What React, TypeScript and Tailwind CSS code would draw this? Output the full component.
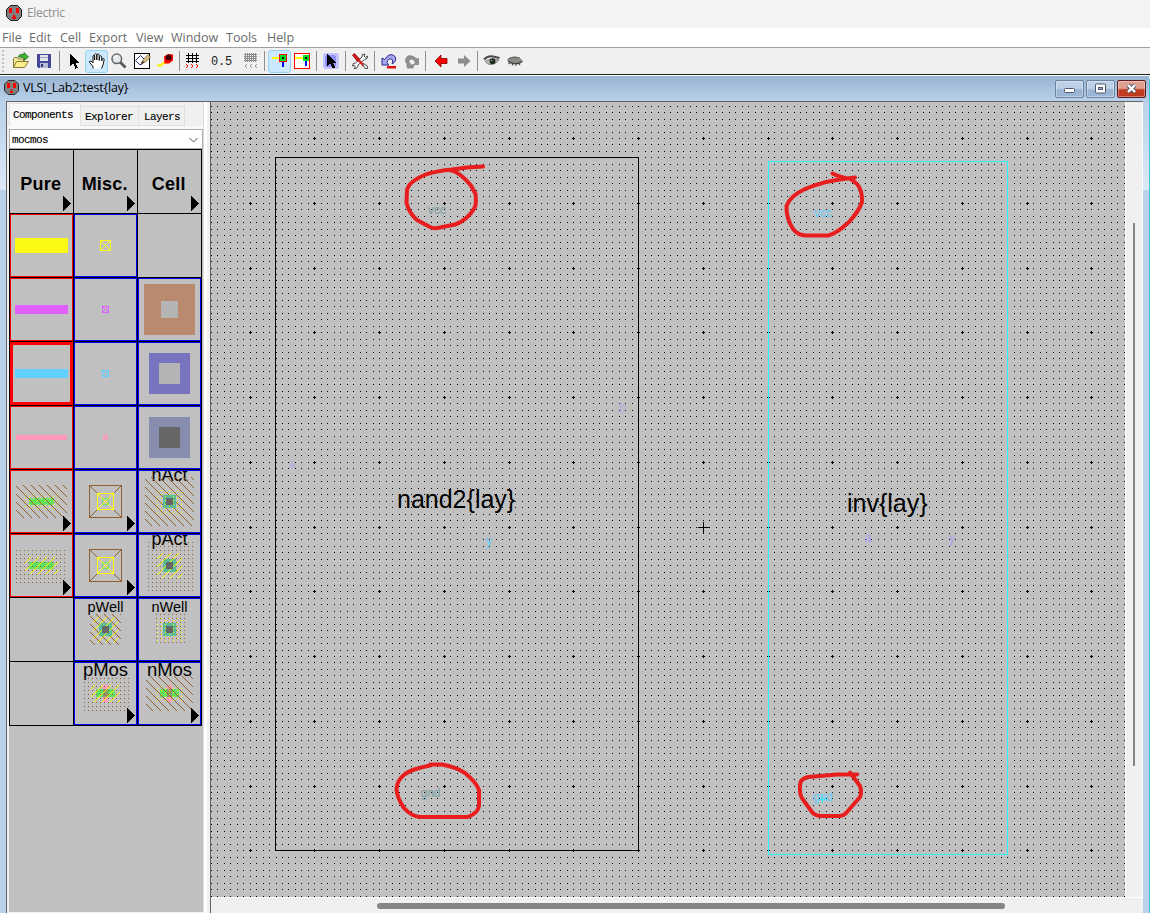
import React, { ReactNode } from "react";

/* ---------- application icon ---------- */
const AppIcon = ({ size = 16 }: { size?: number }) => (
  <svg width={size} height={size} viewBox="0 0 16 16">
    <path d="M4.500 .5h7l4 4v7l-4 4h-7l-4-4v-7z" fill="#808080" stroke="#1a1a1a" />
    <path d="M3 3h3v5h-3zM10 3h3v5h-3zM7 10h2v2h1v2h-4v-2h1z" fill="#ff0000" shapeRendering="crispEdges" />
  </svg>
);

/* ---------- toolbar ---------- */
const Icon = ({ children, crisp }: { children: ReactNode; crisp?: boolean }) => (
  <svg width="18" height="18" viewBox="0 0 18 18" fill="none" shapeRendering={crisp ? "crispEdges" : "auto"}>
    {children}
  </svg>
);

const Slot = ({ w, on, children }: { w: string; on?: boolean; children?: ReactNode }) => (
  <div
    className={
      "flex h-[23px] shrink-0 items-center justify-center " +
      w +
      (on ? " rounded-[3px] border border-[#99d1f5] bg-[#cce8ff]" : "")
    }
  >
    {children}
  </div>
);

const Sep = ({ w }: { w: string }) => (
  <div className={"flex h-[20px] shrink-0 justify-center " + w}>
    <div className="h-full w-px bg-[#909090]" />
  </div>
);

const Eye = ({ open }: { open?: boolean }) => (
  <Icon>
    {open ? (
      <>
        <path d="M1 7.500Q5 3.500 10 4.500L16.500 6" stroke="#4a4a4a" strokeWidth="2" />
        <path d="M2 9.500Q8 5.500 16 8Q12 13 7 12.500Q4 12 2 9.500Z" fill="#c4c4bc" stroke="#666" strokeWidth=".8" />
        <circle cx="9.500" cy="9.300" r="3" fill="#1c2a20" />
        <circle cx="8.600" cy="8.500" r=".8" fill="#9ab09a" />
      </>
    ) : (
      <>
        <path d="M1 7.500Q6 3.500 12 5L16.500 8Q16 12.500 9 12.500Q3 12 1 7.500Z" fill="#8c8c88" />
        <path d="M2.500 6.500Q8 4 14 6" stroke="#5c5c5c" />
        <path
          d="M2 9Q9 14 16.500 9.500M4 10.500l-1.500 1.500M7 12l-1 1.500M10 12.300v1.500M13 11.500l1 1.500"
          stroke="#444"
          strokeWidth="1.100"
        />
      </>
    )}
  </Icon>
);

const Toolbar = () => (
  <div className="flex h-[26px] shrink-0 items-center bg-[#f0f0f0]">
    <div className="flex w-[9px] shrink-0 flex-col items-start gap-[2px] pl-[2px]">
      <i className="size-[2px] bg-[#c0c0c0]" />
      <i className="size-[2px] bg-[#c0c0c0]" />
      <i className="size-[2px] bg-[#c0c0c0]" />
      <i className="size-[2px] bg-[#c0c0c0]" />
      <i className="size-[2px] bg-[#c0c0c0]" />
      <i className="size-[2px] bg-[#c0c0c0]" />
    </div>
    <Slot w="w-[23px]">
      <Icon>
        <path d="M1.500 15.500v-9l1-1h3l1 1.500h5v8z" fill="#f5e79a" stroke="#8a7a30" />
        <path d="M1.500 15.500l3-6h12l-4 6z" fill="#ffec8c" stroke="#8a7a30" />
        <path
          d="M6.500 5Q7 1.500 12 2.500V.5l4.500 4.500-4.500 3.500V6Q9 4.500 6.500 5Z"
          fill="#3fb52e"
          stroke="#1d6b18"
          strokeWidth=".8"
        />
      </Icon>
    </Slot>
    <Slot w="w-[24px]">
      <Icon crisp>
        <path d="M2 2h14v14h-13l-1-1z" fill="#46469a" />
        <path d="M5 3h8v6h-8z" fill="#e4e6ee" />
        <path d="M5 5h8v1h-8z" fill="#9aa0bc" />
        <path d="M5 11h8v5h-8z" fill="#b8bfd4" />
        <path d="M6 12h2v3h-2z" fill="#30307c" />
      </Icon>
    </Slot>
    <Sep w="w-[6px]" />
    <Slot w="w-[23px]">
      <Icon crisp>
        <path d="M5 2v12l3-3 2.500 5.500 2-1-2.500-5h4z" fill="#000" />
      </Icon>
    </Slot>
    <Slot w="w-[23px]" on>
      <Icon>
        <path
          d="M5 16.500v-2L1.700 10.500Q1 8.800 3 9l2 2V4Q5.300 2.500 6.600 4V8 2.500Q7.500 .8 8.800 2.500V8 2.500Q10 1 11.200 2.800V8.500l.4-4.200Q13 3 13.700 4.800V9l.8-2.200Q16 5.800 16.200 7.500L15 13l-1.500 3.500"
          fill="#fff"
          stroke="#111"
          strokeWidth="1"
        />
      </Icon>
    </Slot>
    <Slot w="w-[22px]">
      <Icon>
        <path d="M10 10l5.500 5.500" stroke="#5a5258" strokeWidth="2.600" />
        <circle cx="6.800" cy="6.800" r="4.800" fill="#dfe9ee" stroke="#666" strokeWidth="1.500" />
        <path d="M4 6Q5 4 7.500 4" stroke="#fff" strokeWidth="1.500" />
      </Icon>
    </Slot>
    <Slot w="w-[24px]">
      <Icon>
        <rect x="1.500" y="1.500" width="15" height="15" fill="#fff" stroke="#000" />
        <path d="M7.500 3.500l5 5-4 4h-2l-4-4z" stroke="#24307c" />
        <path d="M8 12l2-4 5-5.500 2.500 2.500-5 5z" fill="#d8bb82" stroke="#7c6440" strokeWidth=".7" />
        <path d="M8 12l1.600-3.300 1.900 1.900z" fill="#333" />
      </Icon>
    </Slot>
    <Slot w="w-[22px]">
      <Icon>
        <path d="M1 13.500h4l3-3h3" stroke="#ffee00" strokeWidth="2.200" />
        <path d="M8 4.500l4-2.500 5 .5v6l-4 3H8.500z" fill="#ff0000" />
        <circle cx="12.700" cy="5.500" r="3" fill="#400" />
      </Icon>
    </Slot>
    <Sep w="w-[6px]" />
    <Slot w="w-[19px]">
      <Icon crisp>
        <path d="M5.500 1v10M9.500 1v10M13.500 1v10M3 3.500h13M3 6.500h13M3 9.500h13" stroke="#000" />
        <path d="M3 12l2 2-2 2M8 12l2 2-2 2M13 12l2 2-2 2" stroke="#ff0000" />
      </Icon>
    </Slot>
    <Slot w="w-[39px]">
      <span className="pt-[2px] pl-[2px] font-['Liberation_Mono',monospace] text-[12px] tracking-[-0.2px] text-[#202020]">
        0.5
      </span>
    </Slot>
    <Slot w="w-[21px]">
      <Icon crisp>
        <path
          d="M3.500 1v9M5.500 1v9M7.500 1v9M9.500 1v9M11.500 1v9M13.500 1v9M2 2.500h13M2 4.500h13M2 6.500h13M2 8.500h13"
          stroke="#8c8c8c"
        />
        <path d="M5 12l-2 2 2 2M10 12l-2 2 2 2M15 12l-2 2 2 2" stroke="#9a9a9a" />
      </Icon>
    </Slot>
    <Sep w="w-[7px]" />
    <Slot w="w-[23px]" on>
      <Icon crisp>
        <path d="M1 5h8v2H1z" fill="#ffff00" />
        <path d="M11 10h2v5h-2z" fill="#0000ff" />
        <rect x="8.500" y="2.500" width="7" height="7" fill="#00e020" stroke="#ff0000" />
        <path d="M11 5h2v2h-2z" fill="#000" />
      </Icon>
    </Slot>
    <Slot w="w-[22px]">
      <Icon crisp>
        <rect x="1.500" y="1.500" width="15" height="15" fill="#fff" stroke="#ff0000" />
        <path d="M2 5h8v2H2z" fill="#ffff00" />
        <path d="M12 9h2v5h-2z" fill="#0000ff" />
        <path d="M10 3h6v6h-6z" fill="#00e020" />
        <path d="M12 5h2v2h-2z" fill="#000" />
      </Icon>
    </Slot>
    <Sep w="w-[6px]" />
    <Slot w="w-[24px]">
      <Icon crisp>
        <rect x="1" y="1" width="16" height="16" rx="3" fill="#c4c4ff" />
        <rect x="3" y="3" width="11" height="12" rx="3" fill="#9090fa" />
        <path d="M5 2v12l3-3 3 5.500 2-1-2.500-5h4z" fill="#000" />
      </Icon>
    </Slot>
    <Sep w="w-[4px]" />
    <Slot w="w-[26px]">
      <Icon>
        <path
          d="M16.500 4l-2 1.500-1.500-1.500 1-2Q10.500 1.500 11 5L4.500 11Q1.500 10.500 1.500 14l2-.5 1 1.500-1.500 1.500Q7 17 7 13L13.500 7.500Q17 7.500 16.500 4Z"
          fill="#fff"
          stroke="#333"
          strokeWidth=".9"
        />
        <path d="M1.500 3l2-1.500 5.500 6-2.500 2z" fill="#e01515" stroke="#700" strokeWidth=".7" />
        <path d="M8 8.500l5 5.500" stroke="#e02020" strokeWidth="2.600" />
        <path d="M12.500 11.500l4 2.500v2.500h-2.500l-2-3.500z" fill="#eee" stroke="#333" strokeWidth=".8" />
      </Icon>
    </Slot>
    <Sep w="w-[3px]" />
    <Slot w="w-[25px]">
      <Icon>
        <path
          d="M2 6v7h7l-2-2.500Q8 6 11.500 7 14 8.500 12 12 17.500 9 15 4.500 10-.5 4.500 7.500Z"
          fill="#a6a6ee"
          stroke="#2a2a8c"
          strokeWidth="1"
        />
        <path d="M7 14h9v2.500H7z" fill="#e01010" />
      </Icon>
    </Slot>
    <Slot w="w-[22px]">
      <Icon>
        <path d="M16 6v7h-6l2-2.500Q10 6 7 8 5.500 10 8 12 2 13 2 7.500 5-.5 14 6.500Z" fill="#8e8e8e" />
        <path d="M3 10l5 2.500 4-.5-2 4.500H4z" fill="#8e8e8e" />
      </Icon>
    </Slot>
    <Sep w="w-[5px]" />
    <Slot w="w-[25px]">
      <Icon>
        <path d="M3 9l6-6v3.500h6v5H9V15z" fill="#ff0000" stroke="#700" strokeWidth=".8" />
      </Icon>
    </Slot>
    <Slot w="w-[22px]">
      <Icon>
        <path d="M15.500 9l-6.500-6v3.500H3v5h6V15z" fill="#8c8c8c" />
      </Icon>
    </Slot>
    <Sep w="w-[5px]" />
    <Slot w="w-[24px]">
      <Eye open />
    </Slot>
    <Slot w="w-[22px]">
      <Eye />
    </Slot>
  </div>
);

/* ---------- component palette ---------- */
const BROWN = "#8f6132";
const YELLOW = "#ffff00";

type Area = { x: number; y: number; w: number; h: number; c: string };

// Fills an area with the pixels that a stipple pattern selects. Patterns are
// anchored to the tile's corner, so neighbouring areas line up.
const stipple = (on: (x: number, y: number) => boolean) =>
  function Stipple({ x, y, w, h, c }: Area) {
    let d = "";
    for (let py = y; py < y + h; py++)
      for (let px = x; px < x + w; px++) if (on(px, py)) d += `M${px} ${py}h1v1h-1z`;
    return <path d={d} fill={c} />;
  };

const Falling = stipple((x, y) => (x - y + 64) % 8 === 6);
const Rising = stipple((x, y) => (x + y) % 8 === 3);
const Dots = stipple((x, y) => x % 4 === 2 && y % 4 === 0);
const Staggered = stipple((x, y) => (y % 4 === 0 && x % 8 === 7) || (y % 4 === 2 && x % 8 === 3));

const Bar = ({ y, h, c, x = 5, w = 53 }: { y: number; h: number; c: string; x?: number; w?: number }) => (
  <rect x={x} y={y} width={w} height={h} fill={c} />
);

const Pin = ({ s, c }: { s: number; c: string }) => {
  const a = 31.5 - s / 2;
  let d = "";
  for (let i = 1; i < s - 1; i++) d += `M${a + i} ${a + i}h1v1h-1zM${a + i} ${a + s - 1 - i}h1v1h-1z`;
  return (
    <>
      <rect x={a + 0.5} y={a + 0.5} width={s - 1} height={s - 1} fill="none" stroke={c} />
      <path d={d} fill={c} />
    </>
  );
};

const Contact = ({ outer, o, inner, i }: { outer: number; o: string; inner: number; i: string }) => (
  <>
    <rect x={31.5 - outer / 2} y={31.5 - outer / 2} width={outer} height={outer} fill={o} />
    <rect x={31.5 - inner / 2} y={31.5 - inner / 2} width={inner} height={inner} fill={i} />
  </>
);

const Label = ({ y, size, children }: { y: number; size: number; children: string }) => (
  <text x="31.500" y={y} textAnchor="middle" fontSize={size} fill="#000">
    {children}
  </text>
);

const WellPin = () => (
  <>
    <Pin s={33} c={BROWN} />
    <rect x="24" y="24" width="15" height="15" fill="#c0c0c0" />
    <rect x="28.500" y="28.500" width="6" height="6" fill="none" stroke="#5fe35f" />
    <Pin s={17} c={YELLOW} />
  </>
);

const Gate = ({ children }: { children: ReactNode }) => (
  <>
    <rect x="22" y="27" width="19" height="8" fill="#5fe35f" />
    <rect x="29" y="23" width="5" height="17" fill="#ff99bb" />
    <rect x="29" y="27" width="5" height="8" fill="#8f9a62" />
    {children}
  </>
);

type Tile = { edge?: "red" | "blue" | "thick"; arrow?: boolean; art?: ReactNode };

const title = (t: string): Tile => ({
  arrow: true,
  art: (
    <text x="30.700" y="39.500" textAnchor="middle" fontSize="18" fontWeight="700" fill="#000" letterSpacing=".2">
      {t}
    </text>
  ),
});

const tiles: Tile[] = [
  title("Pure"),
  title("Misc."),
  title("Cell"),

  { edge: "red", art: <Bar y={24} h={15} c="#f9f915" /> },
  { edge: "blue", art: <Pin s={11} c="#f9f915" /> },
  {},

  { edge: "red", art: <Bar y={27} h={9} c="#e060ff" /> },
  { edge: "blue", art: <Pin s={7} c="#e060ff" /> },
  { edge: "blue", art: <Contact outer={51} o="#b98a6e" inner={17} i="#b4b4b4" /> },

  { edge: "thick", art: <Bar y={27} h={9} c="#62d0ff" /> },
  { edge: "blue", art: <Pin s={7} c="#62d0ff" /> },
  { edge: "blue", art: <Contact outer={41} o="#7874c0" inner={21} i="#b4b4b4" /> },

  { edge: "red", art: <Bar x={6} w={51} y={29} h={5} c="#ff99bb" /> },
  { edge: "blue", art: <Pin s={5} c="#ff99bb" /> },
  { edge: "blue", art: <Contact outer={41} o="#868dae" inner={21} i="#666666" /> },

  {
    edge: "red",
    arrow: true,
    art: (
      <>
        <Bar x={19} w={25} y={28} h={7} c="#5fe35f" />
        <Falling x={6} y={15} w={51} h={33} c={BROWN} />
        <Staggered x={15} y={24} w={33} h={15} c={YELLOW} />
      </>
    ),
  },
  { edge: "blue", arrow: true, art: <WellPin /> },
  {
    edge: "blue",
    art: (
      <>
        <Label y={11} size={18}>nAct</Label>
        <Falling x={7} y={7} w={49} h={49} c={BROWN} />
        <Contact outer={13} o="#5bbb94" inner={7} i="#666666" />
        <Staggered x={19} y={20} w={25} h={25} c={YELLOW} />
        <rect x="28" y="28" width="7" height="7" fill="#666666" />
      </>
    ),
  },

  {
    edge: "red",
    arrow: true,
    art: (
      <>
        <Bar x={19} w={25} y={28} h={7} c="#5fe35f" />
        <Dots x={6} y={16} w={51} h={33} c={BROWN} />
        <Rising x={15} y={23} w={33} h={17} c={YELLOW} />
      </>
    ),
  },
  { edge: "blue", arrow: true, art: <WellPin /> },
  {
    edge: "blue",
    art: (
      <>
        <Label y={11} size={18}>pAct</Label>
        <Dots x={10} y={8} w={47} h={49} c={BROWN} />
        <Contact outer={13} o="#5bbb94" inner={7} i="#666666" />
        <Rising x={19} y={19} w={25} h={25} c={YELLOW} />
        <rect x="28" y="28" width="7" height="7" fill="#666666" />
      </>
    ),
  },

  {},
  {
    edge: "blue",
    art: (
      <>
        <Label y={14} size={14.5}>pWell</Label>
        <Falling x={16} y={16} w={31} h={31} c={BROWN} />
        <Contact outer={13} o="#5bbb94" inner={7} i="#666666" />
        <Rising x={19} y={19} w={25} h={25} c={YELLOW} />
        <rect x="28" y="28" width="7" height="7" fill="#666666" />
      </>
    ),
  },
  {
    edge: "blue",
    art: (
      <>
        <Label y={14} size={14.5}>nWell</Label>
        <Dots x={18} y={16} w={30} h={31} c={BROWN} />
        <Contact outer={13} o="#5bbb94" inner={7} i="#666666" />
        <Staggered x={19} y={19} w={25} h={25} c={YELLOW} />
        <rect x="28" y="28" width="7" height="7" fill="#666666" />
      </>
    ),
  },

  {},
  {
    edge: "blue",
    arrow: true,
    art: (
      <>
        <Label y={14} size={18.5}>pMos</Label>
        <Gate>
          <Dots x={10} y={16} w={46} h={33} c={BROWN} />
          <Rising x={17} y={23} w={29} h={17} c={YELLOW} />
        </Gate>
      </>
    ),
  },
  {
    edge: "blue",
    arrow: true,
    art: (
      <>
        <Label y={14} size={18.5}>nMos</Label>
        <Gate>
          <Falling x={8} y={14} w={47} h={35} c={BROWN} />
          <Staggered x={17} y={23} w={29} h={17} c={YELLOW} />
        </Gate>
      </>
    ),
  },
];

const edgeClass = {
  red: "border border-[#ff0000]",
  blue: "border border-[#0000ff]",
  thick: "border-[3px] border-[#ff0000]",
};

const Palette = () => (
  <div className="grid w-[193px] grid-cols-3 gap-px bg-black p-px tracking-normal [-webkit-text-stroke:0]">
    {tiles.map((t, i) => (
      <div
        key={i}
        className={
          "flex size-[63px] items-center justify-center overflow-hidden bg-[#c0c0c0] " + (t.edge ? edgeClass[t.edge] : "")
        }
      >
        <svg
          width="63"
          height="63"
          viewBox="0 0 63 63"
          shapeRendering="crispEdges"
          className="shrink-0 font-['Liberation_Sans',sans-serif]"
        >
          {t.art}
          {t.arrow && <path d="M53 46v15l8-7.500z" fill="#000" />}
        </svg>
      </div>
    ))}
  </div>
);

const Sidebar = () => (
  <div className="flex w-[197px] shrink-0 flex-col border-r border-[#dcdcdc] bg-[#f0f0f0] pl-[2px] font-['Liberation_Mono',monospace] text-[11px] tracking-[-0.6px] text-black [-webkit-text-stroke:0.12px_black]">
    <div className="flex h-[24px] items-end">
      <div className="flex h-[23px] w-[72px] items-center rounded-t-[1px] border-x border-t border-[#e2e2e2] bg-[#f9f9f9] pl-[3px]">
        Components
      </div>
      <div className="flex h-[20px] w-[58px] items-center border border-l-0 border-[#e0e0e0] pt-[2px] pl-[4px]">
        Explorer
      </div>
      <div className="flex h-[20px] w-[46px] items-center border border-l-0 border-[#e0e0e0] pt-[2px] pl-[5px]">
        Layers
      </div>
    </div>
    <div className="-ml-px h-[3px] bg-[#f9f9f9]" />
    <div className="flex h-[20px] w-[194px] items-center justify-between border border-[#adadad] bg-white pt-[2px] pr-[4px] pl-[2px]">
      <span>mocmos</span>
      <svg width="9" height="6" viewBox="0 0 9 6" fill="none">
        <path d="M.5 1l4 4 4-4" stroke="#555" />
      </svg>
    </div>
    <div className="mb-px flex w-[194px] flex-1 flex-col bg-[#c0c0c0]">
      <Palette />
    </div>
  </div>
);

/* ---------- layout canvas ---------- */
const X0 = 249.6;
const Y0 = 138.01;
const PITCH = 6.475;

const gridPath = () => {
  let d = "";
  for (let i = -6; i <= 135; i++) {
    const x = Math.round(X0 + i * PITCH);
    if (x < 211 || x > 1124) continue;
    for (let j = -5; j <= 118; j++) {
      const y = Math.round(Y0 + j * PITCH);
      if (y < 103 || y > 896) continue;
      d +=
        i % 10 === 0 && j % 10 === 0
          ? `M${x - 1} ${y}h3v1h-3zM${x} ${y - 1}h1v3h-1z`
          : `M${x} ${y}h1v1h-1z`;
    }
  }
  return d;
};

const strokes = [
  "M483 166.500Q467 167 452 169.500Q437 171 427 174Q409 181 407 190L406.500 203Q409 213 417 220L430 227Q434 229 440 227.500L455 224.500Q468 220 475 207Q476.500 202 475.500 194L471 185.500Q463 176 455 171.500L450 170",
  "M832.500 173.500Q840 177.500 852 179L855 177.500Q826 180 805 189Q790 196 786.500 206Q786 218 793 229Q798 235.500 806 235.500H828Q836 234 849 222Q859 211 862 202Q862.500 190 857 184L850 178.500",
  "M430 764.500H442Q456 767 465 773Q476 782 479 790V806Q478 813 468 817H420Q411 816 404 808Q397 798 396.500 789Q397 780 405 774Q412 769 430 765.500",
  "M857 774.500H837L808 777Q800 779 800 785Q799 796 804 801L812 812Q815 816 822 816H839Q844 816 847 812L860 797Q862 792 860 786L850 772.500",
];

const Canvas = () => (
  <svg
    width="914"
    height="795"
    viewBox="211 102 914 795"
    className="block bg-[#c0c0c0] font-['Liberation_Sans',sans-serif]"
  >
    <path d={gridPath()} fill="#000" shapeRendering="crispEdges" />
    <g fill="none" shapeRendering="crispEdges">
      <rect x="275.500" y="157.500" width="363" height="693" stroke="#000" />
      <rect x="768.500" y="161.500" width="239" height="693" stroke="#28f8f8" />
      <path d="M703.500 522v11M698 527.500h12" stroke="#000" />
      <path d="M822.500 796v7M819 799.500h8" stroke="#28f8f8" />
    </g>
    <g fontSize="25" fill="#000">
      <text x="397" y="508">nand2{"{lay}"}</text>
      <text x="847" y="512">inv{"{lay}"}</text>
    </g>
    <g fontSize="12">
      <text x="428" y="214" fill="#7a9f9f">vcc</text>
      <text x="420.500" y="797" fill="#7a9f9f">gnd</text>
      <text x="814" y="217" fill="#62d0ff">vcc</text>
      <text x="813" y="801" fill="#62d0ff">gnd</text>
      <text x="289" y="467.500" fill="#aeaee2">a</text>
      <text x="619" y="412" fill="#aeaee2">b</text>
      <text x="486" y="545" fill="#62d0ff">y</text>
      <text x="865" y="542" fill="#a79ff2">a</text>
      <text x="949" y="542" fill="#a79ff2">y</text>
    </g>
    <g fill="none" stroke="#e81e1e" strokeWidth="4" strokeLinecap="round" strokeLinejoin="round">
      {strokes.map((d) => (
        <path key={d} d={d} />
      ))}
    </g>
  </svg>
);

/* ---------- window frame ---------- */
const WinButton = ({ red, children }: { red?: boolean; children: ReactNode }) => (
  <div
    className={
      "flex h-[18px] w-[29px] items-center justify-center rounded-[2px] border shadow-[inset_0_0_0_1px_rgba(255,255,255,0.35)] " +
      (red
        ? "border-[#5a1820] bg-linear-to-b from-[#e0a090] from-45% to-[#c03a20] to-55%"
        : "border-[#6b82a0] bg-linear-to-b from-[#bdd0e6] from-45% to-[#9bb6d4] to-55%")
    }
  >
    <svg width="13" height="11" viewBox="0 0 13 11" fill="none">
      {children}
    </svg>
  </div>
);

const menu: [string, string][] = [
  ["File", "w-[27px]"],
  ["Edit", "w-[31px]"],
  ["Cell", "w-[29px]"],
  ["Export", "w-[47px]"],
  ["View", "w-[35px]"],
  ["Window", "w-[55px]"],
  ["Tools", "w-[41px]"],
  ["Help", "w-[40px]"],
];

export default function App() {
  return (
    <div className="flex h-[913px] w-[1150px] flex-col overflow-hidden bg-[#f0f0f0]">
      <header className="flex h-[28px] shrink-0 items-center gap-[5px] bg-[#f3f3f3] pb-[3px] pl-[6px]">
        <AppIcon />
        <span className="font-['Open_Sans',sans-serif] text-[12px] tracking-[-0.3px] text-[#8f8f8f]">Electric</span>
      </header>
      <nav className="flex h-[19px] shrink-0 items-center bg-white pt-[2px] pl-[2px] font-['Open_Sans',sans-serif] text-[12.500px] text-[#6a6a6a]">
        {menu.map(([label, w]) => (
          <span key={label} className={"shrink-0 whitespace-nowrap " + w}>
            {label}
          </span>
        ))}
      </nav>
      <div className="h-px shrink-0 bg-[#a0a0a0]" />
      <Toolbar />
      <div className="h-px shrink-0 bg-[#202020]" />
      <section className="flex min-h-0 flex-1 flex-col rounded-tr-[6px] border-t border-r border-t-white border-r-[#38c8e0] bg-[#b9d1ea]">
        <div className="flex h-[25px] shrink-0 items-center bg-linear-to-b from-[#99b4d1] to-[#b9d1ea] pr-[3px] pl-[4px]">
          <div className="pb-[2px]">
            <AppIcon size={15} />
          </div>
          <span className="ml-[4px] flex-1 font-['Open_Sans',sans-serif] text-[12.500px] tracking-[-0.2px] text-black">
            VLSI_Lab2:test{"{lay}"}
          </span>
          <div className="flex gap-[2px]">
            <WinButton>
              <rect x="1.500" y="5.500" width="10" height="4" rx="1" fill="#fff" stroke="#50586a" />
            </WinButton>
            <WinButton>
              <rect x="1.500" y="1" width="10" height="9" rx="1" fill="#fff" stroke="#50586a" />
              <rect x="4.500" y="4.500" width="4" height="2" fill="#9bb6d4" stroke="#50586a" />
            </WinButton>
            <WinButton red>
              <path d="M3 2l7 7M10 2l-7 7" stroke="#50586a" strokeWidth="4.200" />
              <path d="M3 2l7 7M10 2l-7 7" stroke="#fff" strokeWidth="2.400" />
            </WinButton>
          </div>
        </div>
        <div className="flex min-h-0 flex-1">
          <div className="flex w-[6px] shrink-0 flex-col">
            <div className="h-[89px] bg-linear-to-b from-[#b9d1ea] to-[#dce9f7]" />
          </div>
          <div className="flex w-[1137px] shrink-0 border-t border-l border-[#646464] bg-[#f0f0f0]">
            <Sidebar />
            <div className="flex w-[6px] shrink-0">
              <div className="w-[3px] bg-white" />
            </div>
            <div className="flex flex-1 flex-col border-l border-[#646464]">
              <div className="flex h-[795px] shrink-0">
                <Canvas />
                <div className="flex flex-1 flex-col items-center border-x border-white bg-[#f0f0f0] pt-[121px] pr-[1px]">
                  <div className="h-[543px] w-[2px] bg-[#868686]" />
                </div>
              </div>
              <div className="flex flex-1 items-center border-t border-white pl-[166px]">
                <div className="mt-[1px] h-[6px] w-[628px] rounded-full bg-[#868686]" />
              </div>
            </div>
          </div>
          <div className="flex flex-1 flex-col">
            <div className="h-[89px] bg-linear-to-b from-[#b9d1ea] to-[#dce9f7]" />
          </div>
        </div>
      </section>
    </div>
  );
}
